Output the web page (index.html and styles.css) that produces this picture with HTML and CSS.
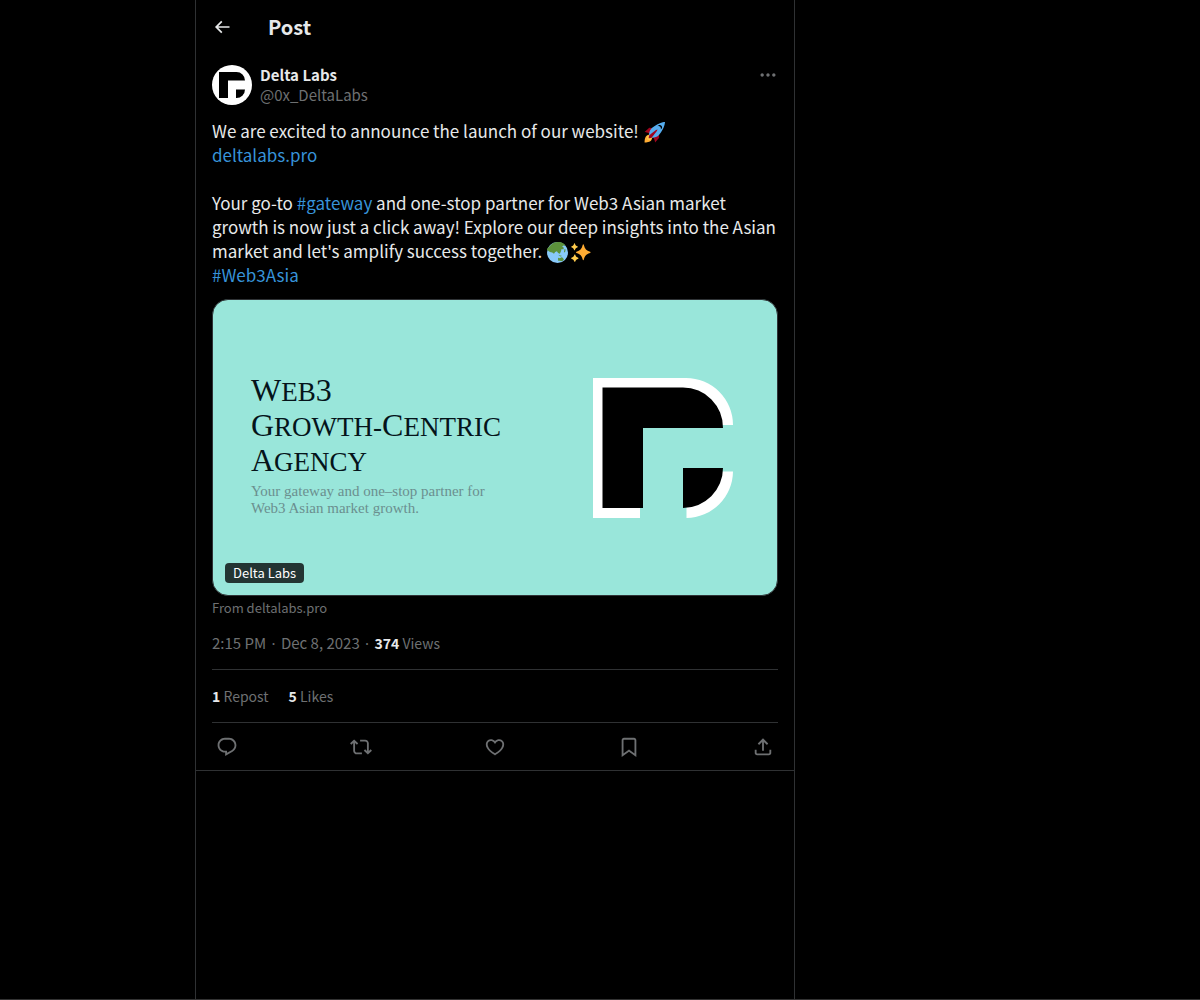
FILE: index.html
```html
<!DOCTYPE html>
<html lang="en">
  <head>
    <meta charset="UTF-8" />
    <meta name="viewport" content="width=device-width, initial-scale=1.0" />
    <title>Delta Labs - Post</title>
    <link rel="stylesheet" href="styles.css">
  </head>

  <body>
    <div class="page">
      <main class="column">
        <header class="topbar">
          <button class="icon-btn back" type="button" aria-label="Back">
            <svg viewBox="0 0 24 24"><path d="M7.414 13l5.043 5.04-1.414 1.42L3.586 12l7.457-7.46 1.414 1.42L7.414 11H21v2H7.414z" /></svg>
          </button>
          <h1>Post</h1>
        </header>

        <article class="post">
          <div class="author">
            <svg class="avatar" viewBox="0 0 40 40">
              <circle cx="20" cy="20" r="20" fill="#fff" />
              <path d="M7 7H24.5A8.5 8.5 0 0 1 33 15.500H16V33H7z" />
              <path d="M24 24.500H33A8.500 8.500 0 0 1 24 33z" />
            </svg>
            <div class="names">
              <a class="name" href="#">Delta Labs</a>
              <a class="handle" href="#">@0x_DeltaLabs</a>
            </div>
            <button class="icon-btn more" type="button" aria-label="More">
              <svg viewBox="0 0 24 24"><path d="M3 12c0-1.1.9-2 2-2s2 .9 2 2-.9 2-2 2-2-.9-2-2zm9 2c1.1 0 2-.9 2-2s-.9-2-2-2-2 .9-2 2 .9 2 2 2zm7 0c1.1 0 2-.9 2-2s-.9-2-2-2-2 .9-2 2 .9 2 2 2z" /></svg>
            </button>
          </div>

          <div class="text">
            <p>
              We are excited to announce the launch of our website!
              <svg class="emoji" viewBox="0 0 36 36">
                <path fill="#a0041e" d="M1 17l8-7 16 1 1 16-7 8s.001-5.999-6-12-12-6-12-6z" />
                <path fill="#ffac33" d="M.973 35s-.036-7.979 2.985-11S15 21.187 15 21.187 14.999 29 11.999 32c-3 3-11.026 3-11.026 3z" />
                <circle cx="8.999" cy="27" r="4" fill="#ffcc4d" />
                <path fill="#55acee" d="M35.999 0s-10 0-22 10c-6 5-6 14-4 16s11 2 16-4c10-12 10-22 10-22z" />
                <path d="M26.999 5c-1.623 0-3.013.971-3.641 2.36.502-.227 1.055-.36 1.641-.36 2.209 0 4 1.791 4 4 0 .586-.133 1.139-.359 1.640 1.389-.627 2.359-2.017 2.359-3.640 0-2.209-1.791-4-4-4z" />
                <path fill="#a0041e" d="M8 28s0-4 1-5 13.001-10.999 14-10-9.001 13-10.001 14S8 28 8 28z" />
              </svg>
            </p>
            <p><a href="#">deltalabs.pro</a></p>
            <br />
            <p>
              Your go-to <a href="#">#gateway</a> and one-stop partner for Web3 Asian market
              growth is now just a click away! Explore our deep insights into the Asian
              market and let's amplify success together.
              <svg class="emoji" viewBox="0 0 36 36">
                <circle cx="18" cy="18" r="18" fill="#88c9f9" />
                <path fill="#5c913b" d="M3 9C7 3 13 0 19 0c4 0 8 1 11 4l1 3-3-1-2 2 3 2-1 3-3-1-1 4-2 4-3-1-2-3-3 1-2 3-3-2-4-1-4-3-3-1zM19 27l3 1 3-2 2 1 2 3-3 3-4-1-3 0zM19 22l4 1 3 1-3 1zM30 12l2 1-1 4-2 1z" />
              </svg><svg class="emoji" viewBox="0 0 36 36">
                <path fill="#ffac33" d="M34.350 16.500c-6-1.500-9.200-4.800-10.600-11.500-.3-1.300-1.700-1.300-2 0-1.400 6.700-4.600 10-10.600 11.500-1.400.4-1.400 1.800 0 2.200 6 1.500 9.200 4.800 10.600 11.500.3 1.300 1.700 1.300 2 0 1.400-6.700 4.600-10 10.600-11.500 1.400-.4 1.400-1.800 0-2.200z" />
                <path fill="#ffcc4d" d="M14 27c-2.800-.8-4-2-5-5-.2-.9-1.300-.9-1.500 0-1 3-2.200 4.200-5 5-.8.300-.8 1.200 0 1.500 2.800.8 4 2 5 5 .2.900 1.300.9 1.500 0 1-3 2.200-4.200 5-5 .8-.3.800-1.200 0-1.500zM13 7.500C10.500 6.800 9.200 5.500 8.500 3c-.2-1-1.300-1-1.500 0-.7 2.500-2 3.800-4.500 4.500-1 .2-1 1.300 0 1.500 2.500.7 3.800 2 4.500 4.500.2 1 1.300 1 1.500 0C9.200 11 10.500 9.700 13 9c1-.2 1-1.300 0-1.500z" />
              </svg>
            </p>
            <p><a href="#">#Web3Asia</a></p>
          </div>

          <a class="card" href="#">
            <div class="card-copy">
              <p class="card-title">
                <span>W</span>EB<span>3</span><br />
                <span>G</span>ROWTH-<span>C</span>ENTRIC<br />
                <span>A</span>GENCY
              </p>
              <p class="card-sub">Your gateway and one–stop partner for<br />Web3 Asian market growth.</p>
            </div>
            <svg class="card-logo" viewBox="0 0 140 140">
              <path fill="#fff" d="M0 0H93A47 47 0 0 1 140 47H47V140H0zM140 93.500A47 47 0 0 1 93.500 140V93.500z" />
              <path d="M9.500 9.500H90A40 40 0 0 1 130 50H50V130H9.500zM90 90H130A40 40 0 0 1 90 130z" />
            </svg>
            <span class="card-label">Delta Labs</span>
          </a>
          <a class="source" href="#">From deltalabs.pro</a>

          <div class="meta">
            <time>2:15 PM <span class="dot">·</span> Dec 8, 2023</time>
            <span class="dot">·</span>
            <span class="count"><b>374</b> Views</span>
          </div>

          <div class="stats">
            <a class="count" href="#"><b>1</b> Repost</a>
            <a class="count" href="#"><b>5</b> Likes</a>
          </div>

          <div class="actions">
            <button class="icon-btn" type="button" aria-label="Reply">
              <svg viewBox="0 0 24 24"><path d="M1.751 10c0-4.420 3.584-8 8.005-8h4.366c4.490 0 8.129 3.640 8.129 8.130 0 2.960-1.607 5.680-4.196 7.110l-8.054 4.460v-3.690h-.067c-4.490.1-8.183-3.510-8.183-8.010zm8.005-6c-3.317 0-6.005 2.690-6.005 6 0 3.370 2.770 6.080 6.138 6.010l.351-.01h1.761v2.300l5.087-2.810c1.951-1.080 3.163-3.130 3.163-5.360 0-3.390-2.744-6.130-6.129-6.130H9.756z" /></svg>
            </button>
            <button class="icon-btn" type="button" aria-label="Repost">
              <svg viewBox="0 0 24 24"><path d="M4.500 3.880l4.432 4.140-1.364 1.460L5.500 7.550V16c0 1.100.896 2 2 2H13v2H7.500c-2.209 0-4-1.790-4-4V7.550L1.432 9.480.068 8.020 4.500 3.880zM16.500 6H11V4h5.500c2.209 0 4 1.790 4 4v8.450l2.068-1.930 1.364 1.460-4.432 4.140-4.432-4.140 1.364-1.460 2.068 1.930V8c0-1.100-.896-2-2-2z" /></svg>
            </button>
            <button class="icon-btn" type="button" aria-label="Like">
              <svg viewBox="0 0 24 24"><path d="M16.697 5.500c-1.222-.06-2.679.51-3.890 2.160l-.805 1.090-.806-1.090C9.984 6.010 8.526 5.440 7.304 5.500c-1.243.07-2.349.78-2.910 1.910-.552 1.120-.633 2.780.479 4.820 1.074 1.970 3.257 4.270 7.129 6.610 3.870-2.340 6.052-4.640 7.126-6.610 1.111-2.040 1.030-3.700.477-4.820-.561-1.130-1.666-1.840-2.908-1.910zm4.187 7.690c-1.351 2.480-4.001 5.120-8.379 7.670l-.503.3-.504-.3c-4.379-2.550-7.029-5.190-8.382-7.670-1.360-2.500-1.410-4.860-.514-6.670.887-1.790 2.647-2.910 4.601-3.010 1.651-.09 3.368.56 4.798 2.010 1.429-1.450 3.146-2.100 4.796-2.010 1.954.1 3.714 1.220 4.601 3.010.896 1.810.846 4.170-.514 6.670z" /></svg>
            </button>
            <button class="icon-btn" type="button" aria-label="Bookmark">
              <svg viewBox="0 0 24 24"><path d="M4 4.500C4 3.120 5.119 2 6.500 2h11C18.881 2 20 3.120 20 4.500v18.440l-8-5.710-8 5.710V4.500zM6.500 4c-.276 0-.5.22-.5.5v14.560l6-4.290 6 4.290V4.500c0-.28-.224-.5-.5-.5h-11z" /></svg>
            </button>
            <button class="icon-btn" type="button" aria-label="Share">
              <svg viewBox="0 0 24 24"><path d="M12 2.590l5.700 5.700-1.410 1.420L13 6.410V16h-2V6.410l-3.300 3.300-1.410-1.420L12 2.590zM21 15l-.02 3.510c0 1.380-1.120 2.490-2.500 2.490H5.500C4.110 21 3 19.880 3 18.500V15h2v3.500c0 .28.22.5.5.5h12.980c.28 0 .5-.22.5-.5L19 15h2z" /></svg>
            </button>
          </div>
        </article>
      </main>
    </div>
  </body>
</html>
```
FILE: styles.css
```css
* {
  box-sizing: border-box;
}

body {
  margin: 0;
  background-color: #000;
  color: #e7e9ea;
  font-family: "Noto Sans CJK SC", "Noto Sans", sans-serif;
  font-size: 15px;
  line-height: 20px;
}

h1,
p {
  margin: 0;
}

a {
  color: inherit;
  text-decoration: none;
}

.page {
  display: grid;
  grid-template-columns: 195px minmax(0, 600px) 1fr;
  min-height: 100vh;
  border-bottom: 1px solid #333;
}

.column {
  grid-column: 2;
  border-left: 1px solid #2f3133;
  border-right: 1px solid #2f3133;
}

.icon-btn {
  display: flex;
  padding: 4px;
  border: 0;
  background: none;
  color: #6e7072;
  cursor: pointer;
}

.icon-btn svg {
  width: 22px;
  height: 22px;
  fill: currentColor;
}

.topbar {
  display: flex;
  align-items: center;
  height: 53px;
  padding: 0 16px;
}

.topbar h1 {
  font-size: 20px;
  line-height: 24px;
}

.back {
  width: 56px;
  padding: 0;
  color: #e7e9ea;
}

.back svg,
.more svg {
  width: 20px;
  height: 20px;
}

.post {
  padding: 12px 16px 0;
  border-bottom: 1px solid #2f3133;
}

.author {
  display: flex;
  align-items: flex-start;
  gap: 8px;
}

.avatar {
  width: 40px;
  height: 40px;
}

.names {
  display: flex;
  flex: 1;
  flex-direction: column;
}

.name {
  font-weight: bold;
}

.handle,
.source,
.meta,
.stats {
  color: #6e7072;
}

.more {
  padding: 0;
}

.text {
  margin: 14px 0 12px;
  font-size: 17px;
  line-height: 24px;
}

.text a {
  color: #3793d8;
}

.emoji {
  width: 21px;
  height: 21px;
  margin: 0 1px;
  vertical-align: -5px;
}

.card {
  position: relative;
  display: flex;
  align-items: center;
  justify-content: space-between;
  aspect-ratio: 566 / 297;
  padding: 0 44px 0 38px;
  border: 1px solid #2f3336;
  border-radius: 16px;
  background-color: #99e6da;
  color: #05141a;
  font-family: "Liberation Serif", serif;
}

.card-copy {
  padding-bottom: 4px;
}

.card-title {
  font-size: 27px;
  line-height: 34px;
}

.card-title span {
  font-size: 32px;
  line-height: 1;
}

.card-sub {
  margin-top: 4px;
  color: #6b8f8f;
  font-size: 15px;
  line-height: 17px;
}

.card-logo {
  width: 140px;
  height: 140px;
}

.card-label {
  position: absolute;
  bottom: 12px;
  left: 12px;
  padding: 0 8px;
  border-radius: 4px;
  background-color: rgba(0, 0, 0, 0.77);
  color: #fff;
  font-family: "Noto Sans CJK SC", "Noto Sans", sans-serif;
  font-size: 13px;
}

.source {
  display: block;
  margin-top: 4px;
  font-size: 13px;
  line-height: 16px;
}

.meta {
  padding: 17px 0 16px;
  border-bottom: 1px solid #2f3133;
}

.dot {
  padding: 0 2px;
  font-family: "Noto Sans", sans-serif;
}

.count {
  font-size: 14px;
}

.count b {
  color: #e7e9ea;
}

.stats {
  display: flex;
  gap: 20px;
  padding: 16px 0;
  border-bottom: 1px solid #2f3133;
}

.actions {
  display: flex;
  justify-content: space-between;
  padding: 9px 0 8px;
}
```
